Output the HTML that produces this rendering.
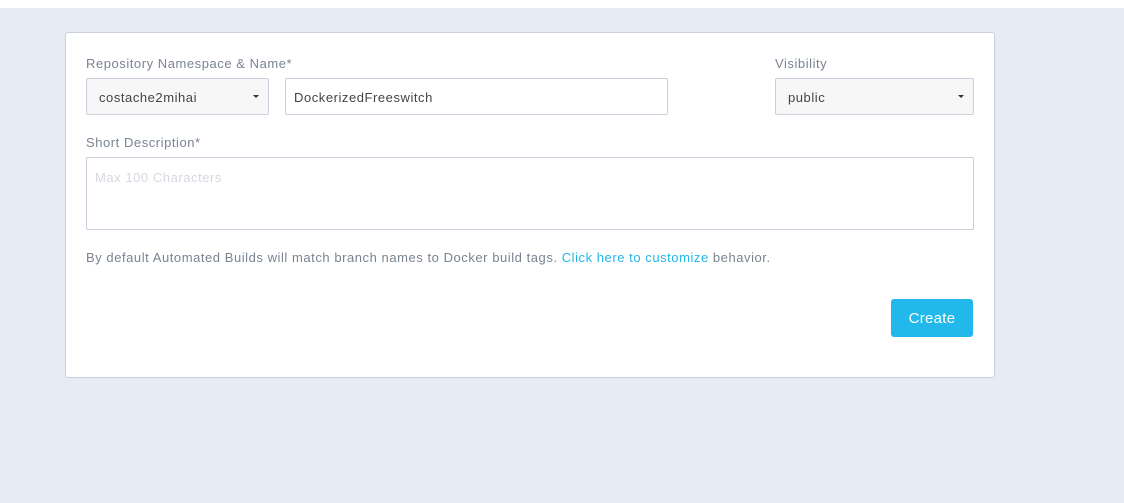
<!DOCTYPE html>
<html><head><style>
*{box-sizing:border-box;margin:0;padding:0}
body{width:1124px;height:503px;background:#e5ecf4;font-family:"Liberation Sans",sans-serif;position:relative;overflow:hidden;letter-spacing:0.55px}
.top{position:absolute;left:0;top:0;width:1124px;height:8px;background:#fff}
.card{position:absolute;left:65px;top:32px;width:930px;height:346px;background:#fff;border:1px solid #c8d1db;border-radius:3px}
.lbl{position:absolute;font-size:13px;color:#7a8491}
.box{position:absolute;border:1px solid #c8d1db;border-radius:2px;font-size:13px;color:#444;padding-left:12px;line-height:37px}
.sel{background:#f7f7f7}
.caret{position:absolute;right:9px;top:16px;width:0;height:0;border-left:3px solid transparent;border-right:3px solid transparent;border-top:3px solid #333}
a{color:#22b8eb;text-decoration:none}
.btn{position:absolute;left:825px;top:266px;width:82px;height:38px;background:#22b8eb;border-radius:3px;color:#fff;font-size:15px;text-align:center;line-height:40px;letter-spacing:0.3px}
</style></head><body>
<div class="top"></div>
<div class="card">
<div class="lbl" style="left:20px;top:23px">Repository Namespace &amp; Name*</div>
<div class="box sel" style="left:20px;top:45px;width:183px;height:37px">costache2mihai<div class="caret"></div></div>
<div class="box" style="left:219px;top:45px;width:383px;height:37px;padding-left:8px">DockerizedFreeswitch</div>
<div class="lbl" style="left:709px;top:23px">Visibility</div>
<div class="box sel" style="left:709px;top:45px;width:199px;height:37px">public<div class="caret"></div></div>
<div class="lbl" style="left:20px;top:102px">Short Description*</div>
<div class="box" style="left:20px;top:124px;width:888px;height:73px;padding-left:8px;line-height:40px;color:#d5d8de;">Max 100 Characters</div>
<div class="lbl" style="left:20px;top:217px">By default Automated Builds will match branch names to Docker build tags. <a>Click here to customize</a> behavior.</div>
<div class="btn">Create</div>
</div>
</body></html>
